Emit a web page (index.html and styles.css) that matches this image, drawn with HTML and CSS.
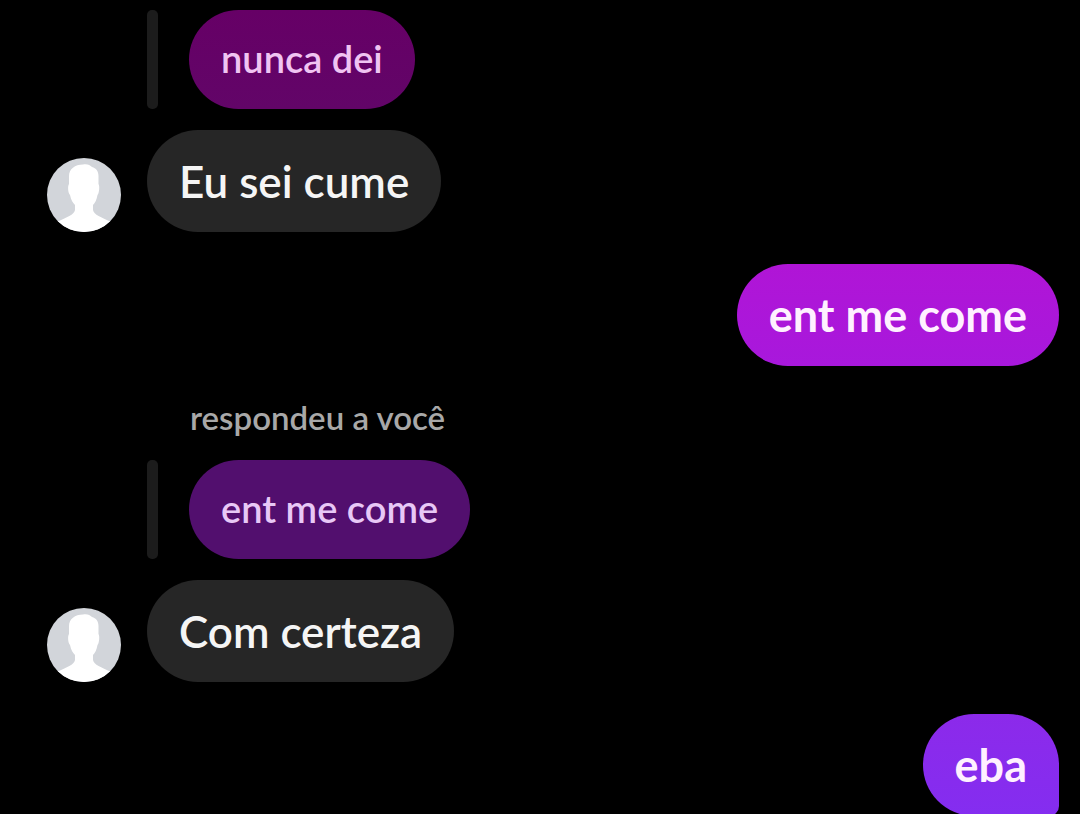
FILE: index.html
```html
<!DOCTYPE html>
<html lang="pt-BR">
<head>
    <meta charset="UTF-8">
    <meta name="viewport" content="width=device-width, initial-scale=1.0">
    <title>Conversa</title>
    <link rel="stylesheet" href="styles.css">
</head>
<body>
    <svg class="symbols" aria-hidden="true">
        <symbol id="person" viewBox="0 0 74 74">
            <rect width="74" height="74" fill="#d2d5da"/>
            <path fill="#fff" d="M36 6.500C40 5.500 43 7 45 9C49 10 51.500 13 51.500 18L51.500 26C53 28 52 36 50.500 37C49.500 42 48 45 46 47L46 52C47 57 54 59 64 64L64 74L10 74L10 64C20 59 27 57 28 52L28 47C26 45 24 42 23 37C21 35 20.500 28 22 26L22 18C22 11 28 6.500 36 6.500Z"/>
        </symbol>
    </svg>

    <main class="chat">
        <!-- mensagem citada -->
        <div class="quote">
            <p class="bubble small pink">nunca dei</p>
        </div>
        <div class="row">
            <svg class="avatar" role="img" aria-label="Foto de perfil"><use href="#person"/></svg>
            <p class="bubble received">Eu sei cume</p>
        </div>

        <p class="bubble sent magenta">ent me come</p>

        <p class="reply-label">respondeu a você</p>
        <div class="quote">
            <p class="bubble small purple">ent me come</p>
        </div>
        <div class="row">
            <svg class="avatar" role="img" aria-label="Foto de perfil"><use href="#person"/></svg>
            <p class="bubble received">Com certeza</p>
        </div>

        <p class="bubble sent violet last">eba</p>
    </main>
</body>
</html>
```

FILE: styles.css
```css
* {
    box-sizing: border-box;
}

body {
    margin: 0;
    background: #000;
    font-family: Lato, sans-serif;
}

p {
    margin: 0;
}

.symbols {
    display: none;
}

.chat {
    display: flex;
    flex-direction: column;
    align-items: flex-start;
    height: 100vh;
    padding: 10px 21px 0 47px;
    overflow: hidden;
}

.chat > * {
    flex-shrink: 0;
}

.bubble {
    padding: 25px 32px;
    border-radius: 51px;
    color: #f5f5f5;
    font-size: 44px;
    line-height: 52px;
    font-weight: 600;
    white-space: nowrap;
}

/* citação */
.quote {
    display: flex;
    margin-left: 100px;
    gap: 31px;
}

.quote::before {
    content: "";
    width: 11px;
    border-radius: 5px;
    background: #1c1c1c;
}

.small {
    padding: 23px 32px 26px;
    font-size: 38px;
    line-height: 50px;
    font-weight: 600;
}

.pink {
    background: linear-gradient(#660066, #620568);
    color: #f0c4f2;
}

.purple {
    background: #520f6e;
    color: #e8c8f6;
}

/* mensagens */
.row {
    display: flex;
    align-items: flex-end;
    gap: 26px;
    margin-top: 21px;
}

.avatar {
    width: 74px;
    height: 74px;
    border-radius: 50%;
}

.received {
    background: #262626;
}

.sent {
    align-self: flex-end;
    margin-top: 32px;
    color: #fff0ff;
    font-size: 45px;
    font-weight: 700;
}

.magenta {
    background: linear-gradient(#b015d6, #a818dc);
}

.violet {
    background: linear-gradient(#8c2aea, #842df0);
}

.last {
    border-bottom-right-radius: 10px;
}

.reply-label {
    margin: 31px 0 23px 143px;
    color: #a8a8a8;
    font-size: 33px;
    line-height: 40px;
    font-weight: 600;
}
```
